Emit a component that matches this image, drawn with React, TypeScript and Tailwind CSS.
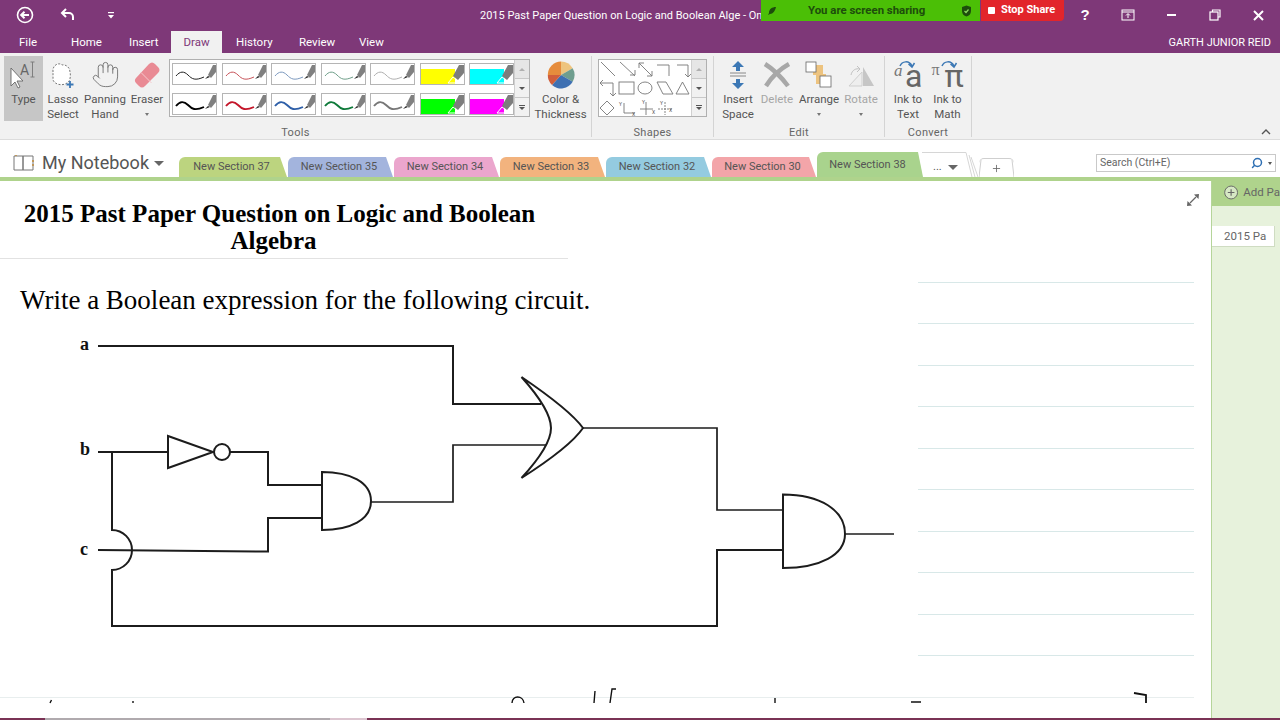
import React from "react";
import { Hand, Search, Plus } from "lucide-react";

function TitleIcons() {
  return (
    <div className="flex items-center h-[30px]">
      <svg width="20" height="20" viewBox="0 0 20 20" className="ml-[15px]" fill="none" stroke="#fff" strokeWidth="1.6">
        <circle cx="10" cy="10" r="7.5" />
        <path d="M14 10H6.5M9.5 6.8 6.2 10l3.3 3.2" strokeWidth="2" />
      </svg>
      <svg width="18" height="18" viewBox="0 0 18 18" className="ml-[24px]" fill="none" stroke="#fff" strokeWidth="2">
        <path d="M7 3 3 7l4 4M3 7h7a4 4 0 0 1 4 4v3" />
      </svg>
      <svg width="10" height="10" viewBox="0 0 10 10" className="ml-[29px]" fill="#fff">
        <rect x="2" y="2" width="6" height="1.2" />
        <path d="M2 5h6L5 8.5z" />
      </svg>
    </div>
  );
}

function WindowButtons() {
  return (
    <div className="flex items-center text-white h-[30px]">
      <span className="w-[16px] text-[15px] font-bold text-center font-['Liberation_Sans',sans-serif]">?</span>
      <svg width="14" height="12" viewBox="0 0 14 12" className="ml-[28px]" fill="none" stroke="#fff" strokeWidth="1">
        <rect x="1" y="1" width="12" height="10" />
        <path d="M1 3h12M7 9V5M5 6.5 7 4.5l2 2" />
      </svg>
      <div className="ml-[32px] w-[9px] h-[2px] bg-white" />
      <svg width="12" height="12" viewBox="0 0 12 12" className="ml-[33px]" fill="none" stroke="#fff" strokeWidth="1.2">
        <path d="M3.5 3V1h7.5v7H9" />
        <rect x="1" y="3" width="8" height="8" />
      </svg>
      <svg width="11" height="11" viewBox="0 0 11 11" className="ml-[32px]" fill="none" stroke="#fff" strokeWidth="2">
        <path d="M1 1l9 9M10 1l-9 9" />
      </svg>
    </div>
  );
}

function ShareBar() {
  return (
    <div className="absolute top-0 left-[761px] flex h-[21px] text-[11px] font-bold font-['Roboto',sans-serif]">
      <div className="w-[219px] bg-[#4bbf06] flex items-center text-[#1d4d0c]">
        <svg width="10" height="10" viewBox="0 0 10 10" className="ml-[6px]" fill="#1d4d0c">
          <path d="M9 1C5 1 2 3 2 7L1 9l2-1c3 0 5-3 6-7z" />
        </svg>
        <span className="ml-[31px] w-[127px] text-[11.400px] whitespace-nowrap">You are screen sharing</span>
        <svg width="11" height="12" viewBox="0 0 11 12" className="ml-[26px]">
          <path d="M5.5 0.5 10 2v4c0 3-2 5-4.500 5.500C3 11 1 9 1 6V2z" fill="#1d4d0c" />
          <path d="M3.500 6l1.500 1.500L7.500 4.500" stroke="#8fdc60" strokeWidth="1.200" fill="none" />
        </svg>
      </div>
      <div className="ml-[1px] w-[83px] bg-[#e2252b] rounded-br-[4px] flex items-center text-white">
        <div className="ml-[7px] w-[7px] h-[7px] bg-white rounded-[1px]" />
        <span className="ml-[6px] whitespace-nowrap">Stop Share</span>
      </div>
    </div>
  );
}

function MenuTabs() {
  return (
    <div className="flex items-end h-[23px] text-[11.5px] text-white">
      <span className="w-[54px] pl-[19px] pb-[2px]">File</span>
      <span className="w-[71px] pl-[17px] pb-[2px]">Home</span>
      <span className="w-[46px] pl-[4px] pb-[2px]">Insert</span>
      <span className="w-[51px] h-[22px] bg-[#f1f1f1] text-[#7e3878] flex items-center justify-center pt-[1px]">Draw</span>
      <span className="w-[64px] pl-[14px] pb-[2px]">History</span>
      <span className="w-[56px] pl-[13px] pb-[2px]">Review</span>
      <span className="w-[60px] pl-[17px] pb-[2px]">View</span>
    </div>
  );
}

function Pen({ color, thick }: { color: string; thick?: boolean }) {
  return (
    <div className="w-[45px] h-[22px] bg-white border border-[#b5b5b5]">
      <svg width="43" height="20" viewBox="0 0 43 20">
        <path d="M3 12C7 7 11 7 15 11S22 17 31 13" fill="none" stroke={color} strokeWidth={thick ? 1.9 : 1} />
        <path d="M35 11 40 1h3v7l-5 6z" fill="#808080" />
        <path d="M32 15 35 12l2 1z" fill="#222" />
      </svg>
    </div>
  );
}

function Marker({ color }: { color: string }) {
  return (
    <div className="w-[45px] h-[22px] bg-white border border-[#b5b5b5]">
      <svg width="43" height="20" viewBox="0 0 43 20">
        <rect x="0" y="5" width="34" height="15" fill={color} />
        <path d="M27 19 32 13l4 3v3z" fill="none" stroke="#fff" strokeWidth="1" />
        <path d="M32 12 38 1h5v8l-6 7z" fill="#7d7d7d" />
      </svg>
    </div>
  );
}

function RibbonLabel({ lines, dim, caret }: { lines: string[]; dim?: boolean; caret?: boolean }) {
  return (
    <div className={`shrink-0 text-[11.5px] leading-[15px] text-center whitespace-nowrap ${dim ? "text-[#a6a6a6]" : "text-[#555555]"}`}>
      {lines.map((l) => (
        <div key={l}>{l}</div>
      ))}
      {caret && <div className="mx-auto mt-[6px] w-0 h-0 border-x-[2.500px] border-x-transparent border-t-[3px] border-t-[#777777]" />}
    </div>
  );
}

function RibbonButton({ w, icon, lines, dim, caret, active }: { w: string; icon: React.ReactNode; lines: string[]; dim?: boolean; caret?: boolean; active?: boolean }) {
  return (
    <div className={`${w} h-[65px] flex flex-col items-center ${active ? "bg-[#c6c6c6]" : ""}`}>
      <div className="h-[36px] shrink-0 flex items-center justify-center">{icon}</div>
      <RibbonLabel lines={lines} dim={dim} caret={caret} />
    </div>
  );
}

function Group({ w, label, border = true, children }: { w: string; label: string; border?: boolean; children: React.ReactNode }) {
  return (
    <div className={`${w} h-[81px] flex flex-col ${border ? "border-r border-[#d4d4d4]" : ""}`}>
      <div className="h-[68px] flex items-start">{children}</div>
      <div className="h-[13px] pt-[5px] flex items-center justify-center text-[11px] tracking-[0.3px] text-[#666666]">{label}</div>
    </div>
  );
}

function GalleryScroll({ dim }: { dim?: boolean }) {
  return (
    <div className="w-[15px] h-full flex flex-col border-l border-[#d0d0d0] bg-[#f1f1f1]">
      <div className={`h-[19px] border-b border-[#c8c8c8] flex items-center justify-center ${dim ? "bg-[#e6e6e6]" : ""}`}>
        <div className="w-0 h-0 border-x-[3px] border-x-transparent border-b-[3px] border-b-[#b0b0b0]" />
      </div>
      <div className="h-[19px] border-b border-[#c8c8c8] flex items-center justify-center">
        <div className="w-0 h-0 border-x-[3px] border-x-transparent border-t-[3px] border-t-[#555555]" />
      </div>
      <div className="flex-1 flex flex-col items-center justify-center gap-[1px]">
        <div className="w-[6px] h-[1px] bg-[#555555]" />
        <div className="w-0 h-0 border-x-[3px] border-x-transparent border-t-[3px] border-t-[#555555]" />
      </div>
    </div>
  );
}

function ShapesDrawing() {
  return (
    <svg width="94" height="56" viewBox="599 60 94 56" fill="none" stroke="#777" strokeWidth="0.9">
      <path d="M601 62 615 76" />
      <path d="M620 62 635 76M630 75h5v-5" />
      <path d="M639 63 652 76M639 68v-5h5M647 76h5v-5" />
      <path d="M657 65h12v11" />
      <path d="M677 65h11v12M685 74l3 3 3-3" />
      <path d="M600 83h13v13M603 80l-3 3 3 3M610 93l3 3 3-3" />
      <rect x="619" y="82" width="15" height="12" />
      <ellipse cx="645" cy="88" rx="7" ry="6" />
      <path d="M657 82h9l7 12h-10z" />
      <path d="M682.500 82 689 94h-13z" />
      <path d="M607 101 614 108 607 115 600 108z" />
      <path d="M624 103v10h11" />
      <path d="M640 109h13M646 102v13" />
      <path d="M665 102v13M658 109h14" strokeDasharray="2 1" />
      <g fontSize="5" fill="#555" stroke="none">
        <text x="619" y="106">Y</text>
        <text x="632" y="116">X</text>
        <text x="642" y="104">Y</text>
        <text x="652" y="114">X</text>
        <text x="660" y="105">Y</text>
        <text x="669" y="112">X</text>
      </g>
    </svg>
  );
}

function Ribbon() {
  return (
    <div className="h-[87px] bg-[#f1f1f1] border-b border-[#dcdcdc] flex pt-[3px] relative">
      <Group w="w-[592px]" label="Tools">
        <div className="ml-[4px] flex">
          <RibbonButton
            w="w-[39px]"
            active
            lines={["Type"]}
            icon={
              <svg width="30" height="30" viewBox="0 0 30 30" className="mt-[2px]">
                <path d="M2 8v18l4-4 3 6 2-1-3-6h6z" fill="#fff" stroke="#666" strokeWidth="0.9" />
                <text x="11" y="15" fontSize="14" fill="#666" fontFamily="Roboto, sans-serif">A</text>
                <path d="M21.500 2h4M21.500 17h4M23.500 2v15" stroke="#777" strokeWidth="0.9" fill="none" />
              </svg>
            }
          />
          <RibbonButton
            w="w-[40px]"
            lines={["Lasso", "Select"]}
            icon={
              <svg width="30" height="30" viewBox="0 0 30 30" fill="none" className="mt-[2px] -ml-[2px]">
                <path d="M6 12C5 5 12 2 15 5c3-1 8 2 8 7 1 4 0 10-3 11-4 3-12 2-14-3z" fill="#fff" stroke="#777" strokeWidth="1" strokeDasharray="2 1.500" />
                <path d="M23 21v7M19.500 24.500h7" stroke="#3c78b5" strokeWidth="1.800" />
              </svg>
            }
          />
          <RibbonButton w="w-[44px]" lines={["Panning", "Hand"]} icon={<Hand size={29} strokeWidth={0.8} color="#777777" />} />
          <RibbonButton
            w="w-[40px]"
            caret
            lines={["Eraser"]}
            icon={
              <svg width="28" height="28" viewBox="0 0 28 28" className="mt-[2px]">
                <path d="M3 17 16 3c2-2 4-2 6 0l3 3c2 2 2 4 0 6L12 25c-2 2-4 2-6 0l-3-3c-1.500-1.500-1.500-3.500 0-5z" fill="#e98a94" />
                <path d="M8 11.500 18.500 22" stroke="#f6c9cd" strokeWidth="1" />
              </svg>
            }
          />
        </div>
        <div className="ml-[2px] mt-[3px] w-[362px] h-[58px] border border-[#b0b0b0] bg-white flex">
          <div className="flex-1 grid grid-cols-7 gap-y-[6px] gap-x-[4.500px] pl-[2px] pt-[3px]">
            <Pen color="#222222" />
            <Pen color="#c8545a" />
            <Pen color="#7d9abf" />
            <Pen color="#6f9f8a" />
            <Pen color="#b0b0b0" />
            <Marker color="#ffff00" />
            <Marker color="#00ffff" />
            <Pen color="#000000" thick />
            <Pen color="#c4162a" thick />
            <Pen color="#2e5fa8" thick />
            <Pen color="#0f7a3a" thick />
            <Pen color="#777777" thick />
            <Marker color="#00ff00" />
            <Marker color="#ff00ff" />
          </div>
          <GalleryScroll dim />
        </div>
        <RibbonButton
          w="w-[61px]"
          lines={["Color &", "Thickness"]}
          icon={
            <svg width="28" height="28" viewBox="-14 -14 28 28" className="mt-[2px]">
              <path d="M0 0V-13.500A13.500 13.500 0 0 1 11.700-6.700z" fill="#eec47e" />
              <path d="M0 0 11.700-6.700A13.500 13.500 0 0 1 11.700 6.700z" fill="#6f9e8f" />
              <path d="M0 0 11.700 6.700A13.500 13.500 0 0 1-9 10z" fill="#3e70b2" />
              <path d="M0 0-9 10A13.500 13.500 0 0 1-13.200 0z" fill="#d15e3b" />
              <path d="M0 0-13.200 0A13.500 13.500 0 0 1 0-13.500z" fill="#e68c3c" />
            </svg>
          }
        />
      </Group>
      <Group w="w-[122px]" label="Shapes">
        <div className="ml-[6px] mt-[3px] w-[109px] h-[58px] border border-[#b0b0b0] bg-white flex">
          <div className="flex-1 overflow-hidden">
            <ShapesDrawing />
          </div>
          <GalleryScroll dim />
        </div>
      </Group>
      <Group w="w-[171px]" label="Edit">
        <div className="flex pl-[4px]">
          <RibbonButton
            w="w-[40px]"
            lines={["Insert", "Space"]}
            icon={
              <svg width="20" height="30" viewBox="0 0 20 30" className="mt-[2px]">
                <path d="M10 1 4 7h4v4h4V7h4z" fill="#3c78b5" />
                <path d="M2 13h16M2 16h16" stroke="#888" strokeWidth="1" />
                <path d="M10 29 4 23h4v-4h4v4h4z" fill="#3c78b5" />
              </svg>
            }
          />
          <RibbonButton
            w="w-[38px]"
            dim
            lines={["Delete"]}
            icon={
              <svg width="28" height="26" viewBox="0 0 28 26" className="mt-[2px]">
                <path d="M2 2C10 7 19 16 25 24" fill="none" stroke="#a8a8a8" strokeWidth="4.500" />
                <path d="M26 2C17 7 8 16 3 24" fill="none" stroke="#a8a8a8" strokeWidth="4.500" />
              </svg>
            }
          />
          <RibbonButton
            w="w-[46px]"
            caret
            lines={["Arrange"]}
            icon={
              <svg width="28" height="28" viewBox="0 0 28 28" className="mt-[2px]">
                <rect x="8" y="4" width="10" height="10" fill="#edc37f" />
                <rect x="11" y="13" width="10" height="10" fill="#edc37f" />
                <rect x="1" y="1" width="10" height="10" fill="#fff" stroke="#666" strokeWidth="0.8" />
                <rect x="15" y="15" width="11" height="11" fill="#fff" stroke="#666" strokeWidth="0.8" />
              </svg>
            }
          />
          <RibbonButton
            w="w-[38px]"
            dim
            caret
            lines={["Rotate"]}
            icon={
              <svg width="28" height="28" viewBox="0 0 28 28" className="mt-[2px]">
                <path d="M16 6 27 25H16z" fill="#c6c6c6" />
                <path d="M2 25 15 11v14z" fill="#eeeeee" stroke="#cfcfcf" strokeWidth="1" />
                <path d="M4 14c1-5 5-7 9-6M10 5l3 3-3 3" fill="none" stroke="#c2c2c2" strokeWidth="1" />
              </svg>
            }
          />
        </div>
      </Group>
      <Group w="w-[87px]" label="Convert">
        <div className="flex pl-[3px]">
          <RibbonButton
            w="w-[40px]"
            lines={["Ink to", "Text"]}
            icon={
              <div className="relative w-[30px] h-[32px] mt-[2px]">
                <span className="absolute left-[1px] top-[4px] text-[17px] italic leading-[16px] text-[#777777] font-['Liberation_Serif',serif]">a</span>
                <span className="absolute left-[12px] top-[5px] text-[32px] leading-[24px] text-[#666666]">a</span>
                <svg width="30" height="14" viewBox="0 0 30 14" className="absolute left-0 top-0" fill="none" stroke="#3c78b5" strokeWidth="1.500">
                  <path d="M7 7c2-5 9-6 12 0M15.500 5l3.500 3 2.500-4" />
                </svg>
              </div>
            }
          />
          <RibbonButton
            w="w-[39px]"
            lines={["Ink to", "Math"]}
            icon={
              <div className="relative w-[32px] h-[32px] mt-[2px]">
                <span className="absolute left-[0px] top-[3px] text-[16px] leading-[16px] text-[#777777] font-['Liberation_Serif',serif]">π</span>
                <span className="absolute left-[13px] top-[5px] text-[32px] leading-[24px] text-[#666666] font-['Roboto',sans-serif]">π</span>
                <svg width="30" height="14" viewBox="0 0 30 14" className="absolute left-[2px] top-0" fill="none" stroke="#3c78b5" strokeWidth="1.500">
                  <path d="M8 7c2-5 9-6 12 0M16.500 5l3.500 3 2.500-4" />
                </svg>
              </div>
            }
          />
        </div>
      </Group>
      <svg width="10" height="6" viewBox="0 0 10 6" className="ml-[289px] mt-[73px]" fill="none" stroke="#555" strokeWidth="1.400">
        <path d="M1 5 5 1l4 4" />
      </svg>
    </div>
  );
}

function SectionTab({ label, w, color }: { label: string; w: string; color: string }) {
  return (
    <div className={`${w} ${color} h-[20px] rounded-tl-[6px] [clip-path:polygon(0_100%,0_0,calc(100%-7px)_0,100%_100%)] flex items-center justify-center pr-[3px] text-[11px] text-[#555555] whitespace-nowrap`}>
      {label}
    </div>
  );
}

function SectionRow() {
  return (
    <div className="h-[37px] flex items-end bg-white relative">
      <div className="w-[179px] h-full flex items-center pl-[13px] pt-[9px] text-[#555555]">
        <svg width="22" height="18" viewBox="0 0 22 18" fill="none" stroke="#777" strokeWidth="1">
          <path d="M1 2h9v14H1zM10 2h10v14H10z" />
          <path d="M3 1v1M20 6v2M20 10v2" stroke="#c08a3c" strokeWidth="1.500" />
        </svg>
        <span className="ml-[7px] text-[18px] leading-none whitespace-nowrap">My Notebook</span>
        <div className="ml-[5px] w-0 h-0 border-x-[5px] border-x-transparent border-t-[5px] border-t-[#666666]" />
      </div>
      <div className="flex gap-[1px] items-end">
        <SectionTab label="New Section 37" w="w-[108px]" color="bg-[#bcd47f]" />
        <SectionTab label="New Section 35" w="w-[105px]" color="bg-[#a3b4dd]" />
        <SectionTab label="New Section 34" w="w-[105px]" color="bg-[#eba6cd]" />
        <SectionTab label="New Section 33" w="w-[105px]" color="bg-[#f2b37e]" />
        <SectionTab label="New Section 32" w="w-[105px]" color="bg-[#94cbe0]" />
        <SectionTab label="New Section 30" w="w-[104px]" color="bg-[#f3a5a9]" />
        <div className="w-[106px] h-[25px] bg-[#a9d38d] rounded-tl-[6px] [clip-path:polygon(0_100%,0_0,calc(100%-5px)_0,100%_100%)] flex items-center justify-center pt-[2px] pr-[5px] text-[11px] text-[#555555] whitespace-nowrap">
          New Section 38
        </div>
      </div>
      <div className="-ml-[1px] w-[57px] h-[25px] flex items-center pl-[11px] pt-[6px] text-[#555555] text-[11px] gap-[6px] relative">
        <span>...</span>
        <div className="w-0 h-0 border-x-[5px] border-x-transparent border-t-[5px] border-t-[#666666]" />
        <svg width="57" height="25" viewBox="0 0 57 25" className="absolute left-0 top-0" fill="none" stroke="#d6d6d6" strokeWidth="1">
          <path d="M0 0.5H44L50 25M47 3 53 25M49 5 56 25" />
        </svg>
      </div>
      <div className="w-[35px] h-[19px] border-t border-[#cfcfcf] rounded-t-[5px] flex items-center justify-center relative">
        <Plus size={11} color="#666666" strokeWidth={1.800} />
        <svg width="35" height="19" viewBox="0 0 35 19" className="absolute left-0 -top-[1px]" fill="none" stroke="#cfcfcf" strokeWidth="1">
          <path d="M0 19 2 2M33 2 35 19" />
        </svg>
      </div>
      <div className="ml-[82px] mb-[5px] w-[180px] h-[18px] bg-white border border-[#c9c9c9] flex items-center pl-[3px] text-[10.500px] text-[#666666]">
        <span className="flex-1">Search (Ctrl+E)</span>
        <Search size={12} color="#2e6fb3" strokeWidth={3} className="-scale-x-100" />
        <div className="ml-[5px] mr-[3px] w-0 h-0 border-x-[2.500px] border-x-transparent border-t-[3px] border-t-[#555555]" />
      </div>
    </div>
  );
}

function Circuit() {
  return (
    <svg width="900" height="315" viewBox="0 330 900 315" fill="none" stroke="#1c1c1c" strokeWidth="2">
      <g fill="#111" stroke="none" fontFamily="'Liberation Serif', serif" fontWeight="bold" fontSize="18">
        <text x="80" y="350">a</text>
        <text x="80" y="455">b</text>
        <text x="80" y="555">c</text>
      </g>
      <path d="M98 346H453V404H541" />
      <path d="M371 502H453V445H546" strokeWidth="1.700" />
      <path d="M521.500 377Q551 410 551 428Q551 446 521.500 478Q570 447 583 428Q570 410 521.500 377Z" fill="#fff" strokeWidth="2" />
      <path d="M98 452H168" />
      <path d="M168 436V468L213 452Z" fill="#fff" />
      <circle cx="222" cy="452" r="8" fill="#fff" />
      <path d="M230 452H268V485H322" />
      <path d="M322 472V530C350 530 371 520 371 501C371 482 350 472 322 472Z" fill="#fff" />
      <path d="M98 550L268 551.500V518H322" />
      <path d="M112 452V530A20 20 0 0 1 112 570V626H717V550H783" />
      <path d="M583 428H717V510H783" strokeWidth="1.700" />
      <path d="M783 494.500V568C820 568 845 555 845 534C845 510 820 494.500 783 494.500Z" fill="#fff" strokeWidth="2" />
      <path d="M845 534H894" strokeWidth="1.600" />
    </svg>
  );
}

const ruleRows = [0, 1, 2, 3, 4, 5, 6, 7, 8, 9];

function PageArea() {
  return (
    <div className="flex-1 flex flex-col relative">
      <div className="h-[516px] flex overflow-hidden">
        <div className="w-[918px] font-['Liberation_Serif',serif] text-black">
          <div className="w-[568px] border-b border-[#e2e2e2] pt-[19px] pb-[4px] pr-[21px] text-center text-[25px] leading-[27px] font-bold whitespace-nowrap">
            <div className="pl-[12px]">2015 Past Paper Question on Logic and Boolean</div>
            <div>Algebra</div>
          </div>
          <div className="mt-[26px] pl-[20px] text-[27px] leading-[30px] whitespace-nowrap">Write a Boolean expression for the following circuit.</div>
          <div className="mt-[15px]">
            <Circuit />
          </div>
        </div>
        <div className="w-[276px] pt-[101px]">
          {ruleRows.map((r) => (
            <div key={r} className="h-[41.440px] border-t border-[#d8e8e8]" />
          ))}
        </div>
      </div>
      <div className="h-[21px] border-t border-[#e8eeee] mr-[17px]">
        <svg width="1194" height="20" viewBox="0 0 1194 20" className="overflow-visible" fill="none" stroke="#111" strokeWidth="1.400">
          <path d="M50 5 51.500 2M133 3V5" />
          <path d="M512 5C512-3 523-3 524 5" />
          <path d="M594 5 595-7M610 5 612-9H616" />
          <path d="M775 0V5M911 4H921" />
          <path d="M1134-5 1146-3V5" strokeWidth="1.800" />
        </svg>
      </div>
      <svg width="14" height="14" viewBox="0 0 14 14" className="absolute top-[12px] right-[11px]" fill="#666">
        <path d="M13 1 8 1.500 12.500 6zM1 13l5-.5L1.500 8z" />
        <path d="M4 10 10 4" stroke="#666" strokeWidth="1.300" />
      </svg>
    </div>
  );
}

function PageList() {
  return (
    <div className="w-[69px] bg-[#e7f2dc] border-l border-[#b5d59a] overflow-hidden text-[11.500px] text-[#666666]">
      <div className="h-[25px] bg-[#afd38c] flex items-center pl-[12px] pb-[2px] gap-[5px] whitespace-nowrap">
        <svg width="15" height="15" viewBox="0 0 15 15" fill="none" stroke="#666" strokeWidth="1">
          <circle cx="7.500" cy="7.500" r="6.800" fill="#d6e8c4" />
          <path d="M7.500 4v7M4 7.500h7" strokeWidth="1.200" />
        </svg>
        <span>Add Pa</span>
      </div>
      <div className="mt-[20px] w-[63px] h-[21px] bg-white border-r border-b border-[#cfdcc2] flex items-center pl-[12px] pt-[1px] whitespace-nowrap">2015 Pa</div>
    </div>
  );
}

function BottomBar() {
  return (
    <div className="h-[2px] flex bg-[#7a3355]">
      <div className="w-[45px]" />
      <div className="w-[285px] bg-[#b0aaae]" />
      <div className="w-[37px] bg-[#dcc5d0]" />
    </div>
  );
}

export default function App() {
  return (
    <div className="w-[1280px] h-[720px] overflow-hidden flex flex-col relative bg-white font-['Roboto',sans-serif]">
      <div className="h-[53px] bg-[#7e3878] flex flex-col relative">
        <div className="h-[30px] flex items-center">
          <TitleIcons />
          <div className="absolute left-[480px] top-[8px] text-[11px] leading-[16px] text-white whitespace-nowrap">2015 Past Paper Question on Logic and Boolean Alge - OneNote</div>
          <div className="ml-auto mr-[16px]">
            <WindowButtons />
          </div>
        </div>
        <div className="flex justify-between pr-[9px]">
          <MenuTabs />
          <span className="text-[11px] text-white pt-[5px] whitespace-nowrap">GARTH JUNIOR REID</span>
        </div>
      </div>
      <ShareBar />
      <Ribbon />
      <SectionRow />
      <div className="h-[4px] bg-[#afd38c]" />
      <div className="flex-1 flex min-h-0">
        <PageArea />
        <PageList />
      </div>
      <BottomBar />
    </div>
  );
}
